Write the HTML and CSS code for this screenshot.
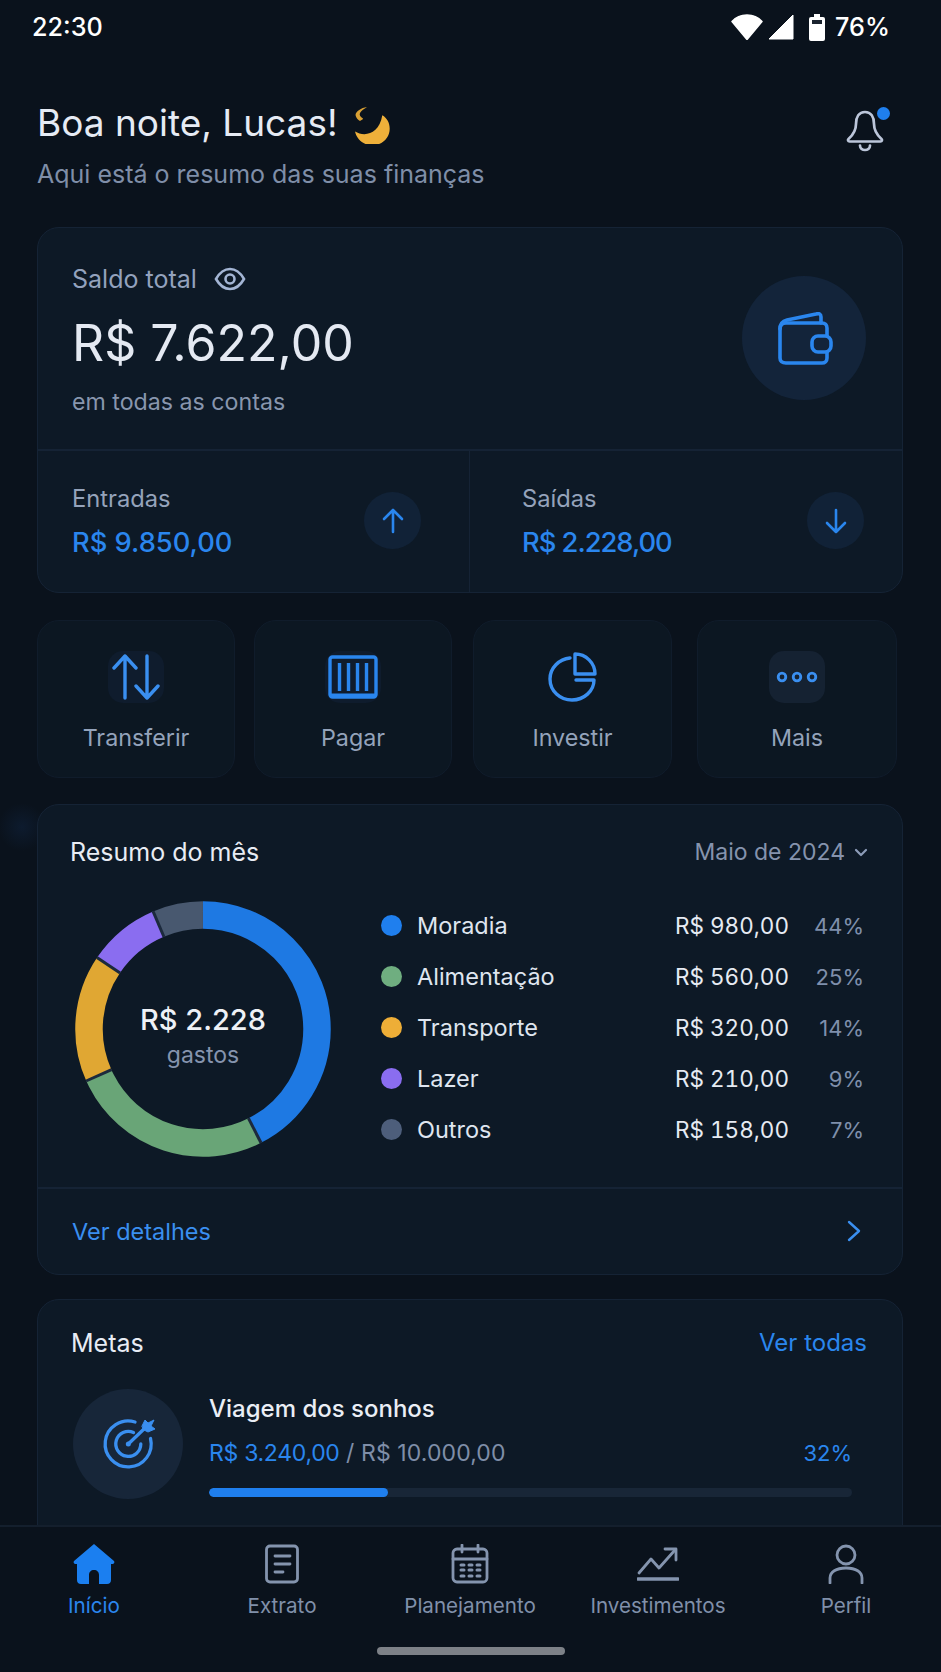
FILE: index.html
```html
<!DOCTYPE html>
<html lang="pt-BR">
<head>
<meta charset="utf-8">
<title>Início</title>
<link rel="stylesheet" href="styles.css">
</head>
<body>
<div class="app">
  <div class="status">
    <span class="time">22:30</span>
    <div class="status-right">
      <svg class="st-wifi" width="32" height="26" viewBox="0 0 32 26"><path d="M1 7.500C5 3 10 1 16 1s11 2 15 6.500L16 25.500z" fill="#fff" stroke="#fff" stroke-width="1.500" stroke-linejoin="round"/></svg>
      <svg class="st-signal" width="26" height="26" viewBox="0 0 26 26"><path d="M25 1v24H1z" fill="#fff" stroke="#fff" stroke-width="1" stroke-linejoin="round"/></svg>
      <svg class="st-batt" width="18" height="27" viewBox="0 0 18 27"><path d="M6 0h6v3h3a2 2 0 0 1 2 2v20a2 2 0 0 1-2 2H3a2 2 0 0 1-2-2V5a2 2 0 0 1 2-2h3z" fill="#fff"/><rect x="4" y="6" width="10" height="4" fill="#1a232e"/></svg>
      <span class="pct-status">76%</span>
    </div>
  </div>

  <main class="content">
    <header class="greet">
      <div>
        <h1 class="hello">Boa noite, Lucas! <svg class="moon" width="40" height="42" viewBox="8 5 40 42"><path d="M38.300 18.300C43 21 45.700 26 45.700 31.700 45.700 41 38 48.300 28.300 48.300 20 48.300 13 43 11 34.500 20 40 35 38 38.300 18.300z" fill="#efb03a"/><path d="M23 10C17 11 12 14 11.500 18 12 21 14 23 16 24 17.500 23 19 22.500 19 21.500 16.500 20 15 18 16 16 17.500 13.500 20 12 23 10z" fill="#d9a034"/></svg></h1>
        <p class="sub">Aqui está o resumo das suas finanças</p>
      </div>
      <div class="bell">
        <svg width="42" height="46" viewBox="5 9 42 46" fill="none" stroke="#bcc6da" stroke-width="2.700" stroke-linecap="round" stroke-linejoin="round"><path d="M25 12C19 12 16 17 16 24c0 7-3 11-7.500 15-1 1-.5 2.500 1 2.500h31c1.500 0 2-1.500 1-2.500C37 35 34 31 34 24c0-7-3-12-9-12z"/><path d="M20 45.500c0 3 2.500 4.500 5 4.500s5-1.500 5-4.500"/></svg>
        <span class="bell-dot"></span>
      </div>
    </header>

    <section class="card hero">
      <div class="hero-top">
        <div>
          <div class="label-row"><span class="label">Saldo total</span>
            <svg width="32" height="24" viewBox="0 0 32 24" fill="none" stroke="#a3b5d4" stroke-width="2.600"><path d="M2 12C6 5 11 2 16 2s10 3 14 10c-4 7-9 10-14 10S6 19 2 12z"/><circle cx="16" cy="12" r="4.500"/></svg>
          </div>
          <div class="amount">R$ 7.622,00</div>
          <div class="muted">em todas as contas</div>
        </div>
        <div class="wallet">
          <svg class="wallet-svg" width="56" height="53" viewBox="0 0 56 53" fill="none" stroke="#2a86ee" stroke-width="3.600" stroke-linecap="round" stroke-linejoin="round"><path d="M2 17C2 11 5 9 9 8L38 2C41 1 43 2 43 5V11"/><path d="M2 17C2 13 4 11 8 11H44C47 11 49 13 49 16V24M49 40V46C49 49 47 51 44 51H8C4 51 2 49 2 46V17"/><rect x="34" y="24" width="19" height="16" rx="6"/></svg>
        </div>
      </div>
      <div class="hero-bottom">
        <div class="stat">
          <div><div class="stat-label">Entradas</div><div class="stat-value">R$ 9.850,00</div></div>
          <div class="stat-ico"><svg width="24" height="26" viewBox="0 0 24 26" fill="none" stroke="#2a86ee" stroke-width="2.600" stroke-linecap="round" stroke-linejoin="round"><path d="M12 24V2M3 11l9-9 9 9"/></svg></div>
        </div>
        <div class="stat stat-right">
          <div><div class="stat-label">Saídas</div><div class="stat-value stat-tight">R$ 2.228,00</div></div>
          <div class="stat-ico"><svg width="24" height="26" viewBox="0 0 24 26" fill="none" stroke="#2a86ee" stroke-width="2.600" stroke-linecap="round" stroke-linejoin="round"><path d="M12 2v22M3 15l9 9 9-9"/></svg></div>
        </div>
      </div>
    </section>

    <nav class="quick">
      <a class="qa qa-1">
        <span class="qi qi-a"><svg width="50" height="46" viewBox="0 0 50 46" fill="none" stroke="#3a8ff0" stroke-width="3.400" stroke-linecap="round" stroke-linejoin="round"><path d="M14 44V2M3 14L14 2l11 12M36 2v42M25 32l11 12 11-12"/></svg></span>
        <span class="ql">Transferir</span>
      </a>
      <a class="qa qa-2">
        <span class="qi qi-a"><svg width="52" height="46" viewBox="0 0 52 46" fill="none" stroke="#2a86ee" stroke-width="3.400" stroke-linejoin="round"><rect x="3" y="3" width="46" height="40" rx="2.500"/><path d="M12.500 9v28M21.500 9v28M30.500 9v28M39.500 9v28"/><path d="M3 41.500h46" stroke-width="4"/></svg></span>
        <span class="ql">Pagar</span>
      </a>
      <a class="qa qa-3">
        <span class="qi"><svg width="50" height="50" viewBox="0 0 50 50" fill="none" stroke="#3a8ff0" stroke-width="3.400" stroke-linecap="round" stroke-linejoin="round"><path d="M22 6C11 7 2 16 2 27c0 12 10 21 22 21 12 0 22-9 22-20H28"/><path d="M27 2c11 0 20 9 20 20H27z"/></svg></span>
        <span class="ql">Investir</span>
      </a>
      <a class="qa qa-4">
        <span class="qi qi-b"><svg width="42" height="12" viewBox="0 0 42 12" fill="none" stroke="#3a8ff0" stroke-width="2.800"><circle cx="6" cy="6" r="3.800"/><circle cx="21" cy="6" r="3.800"/><circle cx="36" cy="6" r="3.800"/></svg></span>
        <span class="ql">Mais</span>
      </a>
    </nav>

    <section class="card summary">
      <div class="sum-head">
        <h2 class="title">Resumo do mês</h2>
        <div class="month">Maio de 2024 <svg width="14" height="9" viewBox="0 0 14 9" fill="none" stroke="#8c9cb8" stroke-width="2.200" stroke-linecap="round" stroke-linejoin="round"><path d="M2 2l5 5 5-5"/></svg></div>
      </div>
      <div class="sum-body">
        <div class="donut">
          <svg width="256" height="256" viewBox="0 0 256 256" fill="none" stroke-width="27.500">
            <circle cx="128" cy="128" r="114" pathLength="360" stroke="#48586f" stroke-dasharray="23 337" transform="rotate(247 128 128)"/>
            <circle cx="128" cy="128" r="114" pathLength="360" stroke="#1e79e3" stroke-dasharray="153 207" transform="rotate(-90 128 128)"/>
            <circle cx="128" cy="128" r="114" pathLength="360" stroke="#69a577" stroke-dasharray="93 267" transform="rotate(63 128 128)"/>
            <circle cx="128" cy="128" r="114" pathLength="360" stroke="#e0a733" stroke-dasharray="58 302" transform="rotate(156 128 128)"/>
            <circle cx="128" cy="128" r="114" pathLength="360" stroke="#8a6df0" stroke-dasharray="33 327" transform="rotate(214 128 128)"/>
            <g stroke="#1c2a3d" stroke-width="3">
              <path d="M173.400 217.100L186.100 242"/>
              <path d="M36.600 168.700L11.100 180"/>
              <path d="M45.100 72.100L21.900 56.400"/>
              <path d="M89 36L78 10.200"/>
            </g>
          </svg>
          <div class="donut-center">
            <div class="donut-val">R$ 2.228</div>
            <div class="donut-sub">gastos</div>
          </div>
        </div>
        <ul class="legend">
          <li class="lrow"><i class="dot d1"></i><span class="lname">Moradia</span><span class="lval">R$ 980,00</span><span class="lpct">44%</span></li>
          <li class="lrow"><i class="dot d2"></i><span class="lname">Alimentação</span><span class="lval">R$ 560,00</span><span class="lpct">25%</span></li>
          <li class="lrow"><i class="dot d3"></i><span class="lname">Transporte</span><span class="lval">R$ 320,00</span><span class="lpct">14%</span></li>
          <li class="lrow"><i class="dot d4"></i><span class="lname">Lazer</span><span class="lval">R$ 210,00</span><span class="lpct">9%</span></li>
          <li class="lrow"><i class="dot d5"></i><span class="lname">Outros</span><span class="lval">R$ 158,00</span><span class="lpct">7%</span></li>
        </ul>
      </div>
      <a class="details"><span>Ver detalhes</span><svg width="14" height="22" viewBox="0 0 14 22" fill="none" stroke="#3a8ff0" stroke-width="2.400" stroke-linecap="round" stroke-linejoin="round"><path d="M2 2l10 9-10 9"/></svg></a>
    </section>

    <section class="card goals">
      <div class="goal-head"><h2 class="title">Metas</h2><a class="link">Ver todas</a></div>
      <div class="goal">
        <div class="goal-ico">
          <svg width="80" height="80" viewBox="-2 5 80 80" fill="none" stroke="#3a8ff0" stroke-width="3.300" stroke-linecap="round"><path d="M45 23A23 23 0 1 0 60.500 39.500"/><path d="M43.500 33.500A12.500 12.500 0 1 0 50.800 45"/><path d="M38.300 45L55 29"/><circle cx="38.300" cy="45" r="2.500" fill="#3a8ff0" stroke="none"/><path d="M52 27l3-6 3 3 6-3-3 6 4 3-7 3-4-2z" fill="#3a8ff0" stroke-width="1" stroke-linejoin="round"/></svg>
        </div>
        <div class="goal-main">
          <div class="goal-name">Viagem dos sonhos</div>
          <div class="goal-line"><span><span class="blue blue-tight">R$ 3.240,00</span> <span class="gray">/ R$ 10.000,00</span></span><span class="blue goal-pct">32%</span></div>
          <div class="bar"><div class="bar-fill" style="width:27.900%"></div></div>
        </div>
      </div>
    </section>
  </main>

  <footer class="tabbar">
    <div class="tabs">
      <a class="tab active"><svg width="42" height="40" viewBox="0 0 42 40"><path d="M21 0L41 17C42 18.500 41 20 39.500 20H38V36C38 38.500 36.500 40 34 40H26V31C26 28 24 26 21 26 18 26 16 28 16 31V40H8C5.500 40 4 38.500 4 36V20H2.500C1 20 0 18.500 1 17z" fill="#1b7ff0"/></svg><span>Início</span></a>
      <a class="tab"><svg width="36" height="40" viewBox="0 0 36 40" fill="none" stroke="#8494ae" stroke-width="2.800" stroke-linecap="round"><rect x="2.500" y="2" width="31" height="36" rx="3.500"/><path d="M11 12h15M11 20h15M11 28h8"/></svg><span>Extrato</span></a>
      <a class="tab"><svg width="38" height="40" viewBox="0 0 38 40" fill="none" stroke="#8494ae" stroke-width="2.800" stroke-linecap="round"><rect x="2" y="5" width="34" height="33" rx="4"/><path d="M2 15h34M11 1v7M27 1v7"/><path d="M10 21h3M18 21h3M26 21h3M10 26h3M18 26h3M26 26h3M10 32h3M18 32h3M26 32h3" stroke-width="3"/></svg><span>Planejamento</span></a>
      <a class="tab"><svg width="42" height="40" viewBox="0 0 42 40" fill="none" stroke="#8494ae" stroke-width="2.800" stroke-linecap="round" stroke-linejoin="round"><path d="M2 29l12-14 8 9L38 6"/><path d="M28 5h11v11"/><path d="M1 35h40" stroke-width="3.400"/></svg><span>Investimentos</span></a>
      <a class="tab"><svg width="38" height="40" viewBox="0 0 38 40" fill="none" stroke="#8494ae" stroke-width="2.800" stroke-linecap="round"><circle cx="19" cy="11" r="9"/><path d="M3 39v-5c0-6 6-10 16-10s16 4 16 10v5"/></svg><span>Perfil</span></a>
    </div>
    <div class="home"></div>
  </footer>
</div>
</body>
</html>
```

FILE: styles.css
```css
* { box-sizing: border-box; margin: 0; padding: 0; }
html, body { width: 941px; height: 1672px; overflow: hidden; background: #09111b; }
body { font-family: Inter, "Noto Sans", "Liberation Sans", sans-serif; color: #e4e9f2; }
.app { width: 941px; height: 1672px; display: flex; flex-direction: column; overflow: hidden;
  background: radial-gradient(circle at 22px 827px, #0d1b2e 0, rgba(13,27,46,0) 24px), #0a121c; }

.status { flex: none; height: 54px; padding: 0 51px 0 32px; display: flex; justify-content: space-between; align-items: center; color: #fff; font-size: 25.200px; }
.time { font-weight: 500; }
.status-right { display: flex; align-items: center; }
.st-wifi { margin-right: 5px; }
.st-signal { margin-right: 14px; }
.st-batt { margin-right: 9px; }
.pct-status { font-weight: 500; }

.content { flex: 1; min-height: 0; overflow: hidden; padding: 0 38px 0 37px; }

.greet { display: flex; justify-content: space-between; padding-top: 48px; height: 173px; }
.hello { font-size: 37px; font-weight: 400; line-height: 42px; color: #e6ebf4; display: flex; align-items: center; gap: 14px; }
.sub { font-size: 25px; color: #7f8ea8; line-height: 30px; margin-top: 15px; }
.bell { position: relative; width: 42px; height: 46px; margin: 7px 16px 0 0; }
.bell-dot { position: absolute; right: -3px; top: -2px; width: 13px; height: 13px; border-radius: 50%; background: #1f7fee; }

.card { background: #0d1926; border: 1px solid #152335; border-radius: 22px; }
.hero { height: 366px; display: flex; flex-direction: column; }
.hero-top { height: 223px; padding: 34px 36px 0 34px; display: flex; justify-content: space-between; border-bottom: 2px solid #152335; }
.label-row { display: flex; align-items: center; gap: 17px; height: 34px; }
.label { font-size: 25px; color: #93a2bd; }
.amount { font-size: 50px; line-height: 60px; color: #e4e9f2; margin-top: 17px; font-weight: 400; }
.muted { font-size: 23.200px; line-height: 30px; margin-top: 14px; color: #8896ae; }
.wallet { width: 124px; height: 124px; border-radius: 50%; background: #13243a; display: flex; align-items: center; justify-content: center; margin-top: 14px; }
.wallet-svg { margin-left: 3px; }
.hero-bottom { flex: 1; display: flex; }
.stat { flex: 0 0 431px; padding: 32px 48px 0 34px; display: flex; justify-content: space-between; }
.stat-right { flex: 1; border-left: 1px solid #152335; padding-left: 52px; padding-right: 38px; }
.stat-label { font-size: 23.700px; line-height: 32px; color: #95a3bb; }
.stat-value { font-size: 27.300px; line-height: 34px; color: #2a86ee; font-weight: 500; margin-top: 11px; }
.stat-tight { letter-spacing: -1px; }
.stat-ico { width: 57px; height: 57px; border-radius: 50%; background: #112237; display: flex; align-items: center; justify-content: center; margin-top: 9px; }

.quick { display: grid; grid-template-columns: 198px 198px 199px 200px; height: 158px; margin-top: 27px; }
.qa { background: #0c1722; border: 1px solid #101c2b; border-radius: 22px; display: flex; flex-direction: column; align-items: center; padding-top: 30px; }
.qa-2 { margin-left: 19px; width: 198px; }
.qa-3 { margin-left: 40px; width: 199px; }
.qa-4 { margin-left: 65px; width: 200px; }
.qi { width: 56px; height: 52px; display: flex; align-items: center; justify-content: center; border-radius: 15px; }
.qi-a { background: #0f1c2d; }
.qi-b { background: #152232; }
.ql { font-size: 23.300px; line-height: 30px; color: #94a3bb; margin-top: 20px; }

.summary { height: 471px; margin-top: 26px; }
.sum-head { display: flex; justify-content: space-between; align-items: center; padding: 29px 34px 0 32px; }
.title { font-size: 25px; font-weight: 400; line-height: 36px; color: #e8ecf4; }
.month { font-size: 23px; line-height: 36px; color: #8593ad; display: flex; align-items: center; gap: 9px; }
.sum-body { display: flex; padding: 26px 0 0 37px; height: 319px; border-bottom: 2px solid #152335; }
.donut { position: relative; width: 256px; height: 256px; margin-top: 5px; flex: none; }
.donut-center { position: absolute; inset: 0; padding-top: 14px; display: flex; flex-direction: column; align-items: center; justify-content: center; }
.donut-val { font-size: 29px; line-height: 36px; color: #eef1f6; font-weight: 500; }
.donut-sub { font-size: 23px; line-height: 30px; color: #8594ae; margin-top: 2px; }
.legend { list-style: none; margin-left: 50px; width: 483px; padding-top: 4px; }
.lrow { display: flex; align-items: center; height: 51px; }
.dot { width: 21px; height: 21px; border-radius: 50%; flex: none; }
.d1 { background: #1f7fee; }
.d2 { background: #6fae80; }
.d3 { background: #eeae37; }
.d4 { background: #8a6df0; }
.d5 { background: #4d5e7b; }
.lname { font-size: 23.500px; margin-left: 15px; flex: 1; color: #dfe5ef; }
.lval { font-size: 22.500px; color: #e6ebf3; font-variant-numeric: tabular-nums; }
.lpct { font-size: 22px; width: 75px; text-align: right; color: #7f8fab; }
.details { display: flex; justify-content: space-between; align-items: center; padding: 0 41px 0 34px; height: 84px; color: #3a8ff0; font-size: 23.500px; }

.goals { margin-top: 24px; height: 400px; padding: 0 36px 0 35px; }
.goal-head { display: flex; justify-content: space-between; align-items: center; padding: 25px 0 0 0; margin: 0 -1px 0 -2px; }
.link { font-size: 24px; line-height: 36px; color: #2a86ee; }
.goal { display: flex; margin-top: 28px; }
.goal-ico { width: 110px; height: 110px; border-radius: 50%; background: #172639; display: flex; align-items: center; justify-content: center; flex: none; }
.goal-main { flex: 1; margin-left: 26px; padding-right: 14px; }
.goal-name { font-size: 24px; line-height: 34px; font-weight: 500; color: #eaeef5; margin-top: 3px; }
.goal-line { display: flex; justify-content: space-between; font-size: 23px; line-height: 30px; margin-top: 12px; }
.goal-pct { font-size: 22px; }
.blue { color: #2a86ee; font-weight: 400; }
.blue-tight { letter-spacing: -0.300px; }
.gray { color: #7f8ea8; letter-spacing: 0.100px; }
.bar { height: 9px; background: #182637; border-radius: 5px; margin-top: 20px; overflow: hidden; }
.bar-fill { height: 100%; background: #1f7fee; border-radius: 5px; }

.tabbar { flex: none; height: 147px; background: #0a121c; border-top: 2px solid #141f2d; display: flex; flex-direction: column; }
.tabs { display: grid; grid-template-columns: repeat(5, 188px); padding-top: 17px; }
.tab { display: flex; flex-direction: column; align-items: center; font-size: 20.600px; color: #8090aa; }
.tab svg { height: 40px; }
.tab span { line-height: 28px; margin-top: 8px; white-space: nowrap; }
.active { color: #2a86ee; }
.home { width: 188px; height: 8px; border-radius: 4px; background: #7d8187; margin: 27px auto 0; }
```
